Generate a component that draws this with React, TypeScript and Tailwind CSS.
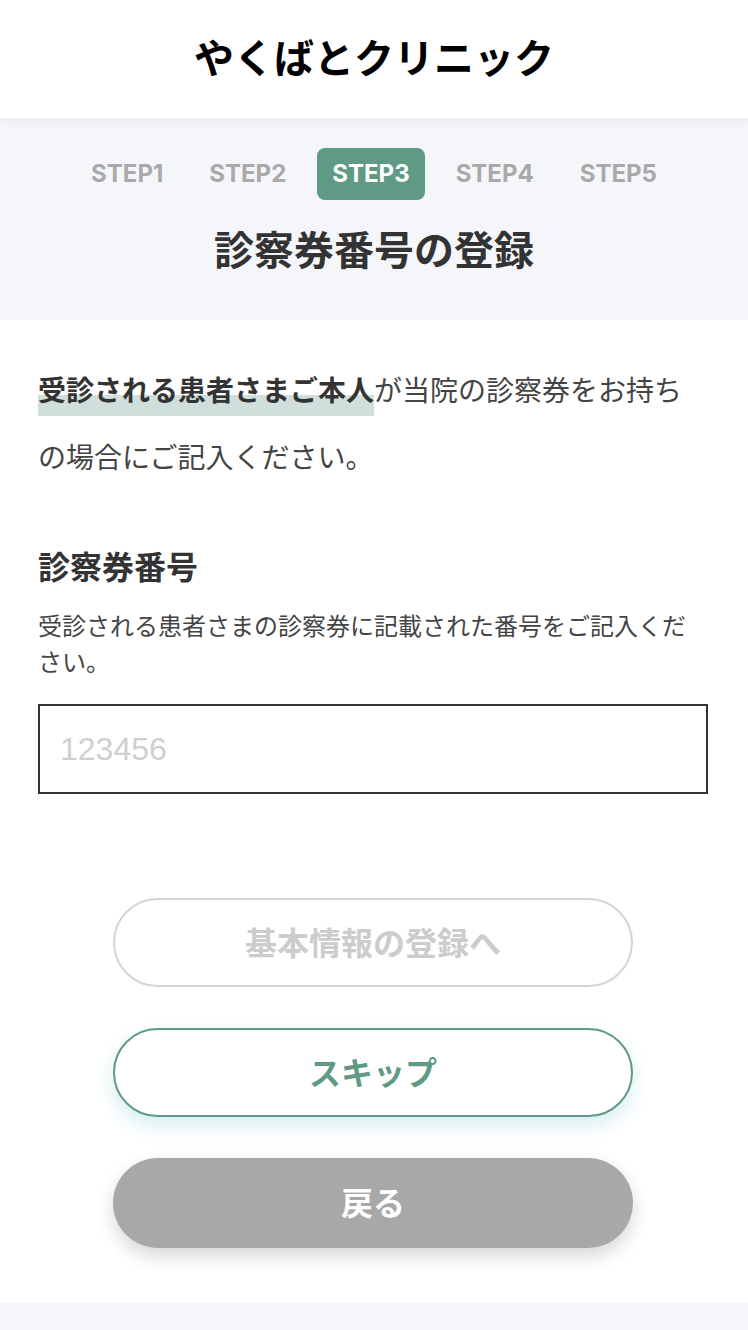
import React from "react";

const jp = "font-['Noto_Sans_CJK_JP','Noto_Sans',sans-serif]";

export default function App() {
  const steps = ["STEP1", "STEP2", "STEP3", "STEP4", "STEP5"];
  return (
    <div className={`${jp} w-[748px] bg-white text-[#333]`}>
      <header className="relative z-10 flex h-[118px] items-center justify-center bg-white pb-[7px] shadow-[0_2px_8px_rgba(0,0,0,0.07)]">
        <h1 className="text-[40px] font-bold leading-none text-black">やくばとクリニック</h1>
      </header>

      <section className="flex h-[202px] flex-col items-center bg-[#f5f6fa] pt-[30px]">
        <div className="flex items-center gap-4 font-['Inter',sans-serif]">
          {steps.map((s) => (
            <div
              key={s}
              className={
                s === "STEP3"
                  ? "flex h-[52px] items-center rounded-[8px] bg-[#5f9a85] px-[15px] text-[24px] font-bold text-white"
                  : "flex h-[52px] items-center px-[15px] text-[24px] font-bold text-[#a9a9a9]"
              }
            >
              {s}
            </div>
          ))}
        </div>
        <h2 className="mt-[20px] text-[40px] font-bold leading-[56px] text-[#333]">診察券番号の登録</h2>
      </section>

      <main className="pl-[38px] pr-[40px] pt-[36px]">
        <p className="text-[28px] leading-[67px] text-[#444]">
          <span className="bg-[linear-gradient(transparent_56%,#cfe0dc_56%)] pb-[7px] font-bold text-[#333]">
            受診される患者さまご本人
          </span>
          が当院の診察券をお持ちの場合にご記入ください。
        </p>

        <h3 className="mt-[51px] text-[32px] font-bold leading-[48px] text-[#333]">診察券番号</h3>
        <p className="mt-[18px] text-[24px] leading-[36px] text-[#444]">
          受診される患者さまの診察券に記載された番号をご記入ください。
        </p>

        <input
          type="text"
          placeholder="123456"
          className="mt-[25px] box-border block h-[90px] w-full border-2 border-[#333] bg-white pl-[20px] font-['Liberation_Sans',Arial,sans-serif] text-[32px] text-[#333] outline-none placeholder:text-[#cfcfcf]"
        />

        <div className="mt-[104px] flex flex-col items-center gap-[41px]">
          <button className="flex h-[89px] w-[520px] items-center justify-center rounded-full border-2 border-[#d4d4d4] bg-white pb-[4px] text-[32px] font-bold text-[#cccccc]">
            基本情報の登録へ
          </button>
          <button className="flex h-[89px] w-[520px] items-center justify-center rounded-full border-2 border-[#5f9a85] bg-white pb-[4px] text-[32px] font-bold text-[#5f9a85] shadow-[0_8px_18px_rgba(100,190,205,0.28)]">
            スキップ
          </button>
          <button className="flex h-[90px] w-[520px] items-center justify-center rounded-full bg-[#a8a8a8] pb-[4px] text-[32px] font-bold text-white shadow-[0_8px_18px_rgba(0,0,0,0.16)]">
            戻る
          </button>
        </div>
      </main>

      <footer className="mt-[55px] h-[27px] bg-[#f5f6fa]" />
    </div>
  );
}
